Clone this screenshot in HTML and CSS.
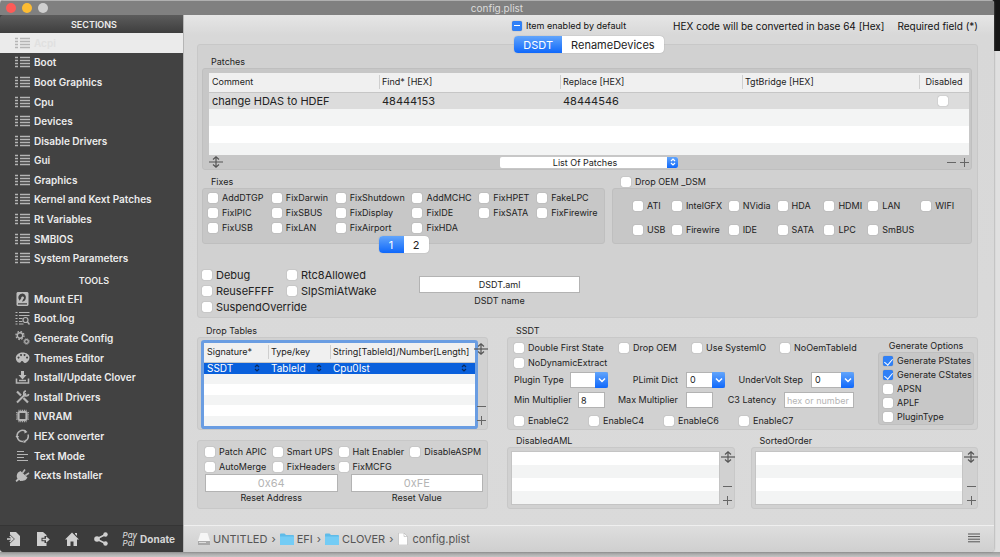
FILE: index.html
```html
<!DOCTYPE html>
<html lang="en">
<head>
    <meta charset="UTF-8">
    <meta name="viewport" content="width=device-width, initial-scale=1.0">
    <title>config.plist</title>
    <link rel="stylesheet" href="styles.css">
</head>
<body>
    <svg class="sprite" aria-hidden="true">
        <symbol id="list" viewBox="0 0 15 12">
            <path d="M0 1.500h3M0 4.500h3M0 7.500h3M0 10.500h3" stroke-width="1.500"/>
            <path d="M5 1.500h10M5 4.500h10M5 7.500h10M5 10.500h10" stroke-width="1.500"/>
        </symbol>
        <symbol id="resize" viewBox="0 0 14 12">
            <path d="M0 6h14" fill="none" stroke="#555" stroke-width="1.200"/>
            <path d="M7 1v10M4 3.500L7 .8l3 2.700M4 8.500l3 2.700 3-2.700" fill="none" stroke="#555" stroke-width="1.200"/>
        </symbol>
        <symbol id="updown" viewBox="0 0 6 8">
            <path d="M1 3L3 1l2 2M1 5l2 2 2-2" fill="none" stroke="currentColor" stroke-width="1.200"/>
        </symbol>
        <symbol id="down" viewBox="0 0 8 6">
            <path d="M1 1.500L4 4.500l3-3" fill="none" stroke="#fff" stroke-width="1.500"/>
        </symbol>
        <symbol id="folder" viewBox="0 0 14 12">
            <path d="M0 1.500Q0 .5 1 .5h3.500L6 2h7q1 0 1 1v8q0 1-1 1H1q-1 0-1-1z" fill="#5fbbe8"/>
            <path d="M0 3.500h14V11q0 1-1 1H1q-1 0-1-1z" fill="#74ccf5"/>
        </symbol>
    </svg>

    <div class="desktop">
    <div class="window">
        <header class="titlebar">
            <div class="lights"><span class="light red"></span><span class="light yellow"></span><span class="light"></span></div>
            <h1>config.plist</h1>
        </header>

        <nav class="sidebar">
            <h2 class="side-head">SECTIONS</h2>
            <ul class="sections">
                <li><a class="active" href="#"><svg><use href="#list"/></svg>Acpi</a></li>
                <li><a href="#"><svg><use href="#list"/></svg>Boot</a></li>
                <li><a href="#"><svg><use href="#list"/></svg>Boot Graphics</a></li>
                <li><a href="#"><svg><use href="#list"/></svg>Cpu</a></li>
                <li><a href="#"><svg><use href="#list"/></svg>Devices</a></li>
                <li><a href="#"><svg><use href="#list"/></svg>Disable Drivers</a></li>
                <li><a href="#"><svg><use href="#list"/></svg>Gui</a></li>
                <li><a href="#"><svg><use href="#list"/></svg>Graphics</a></li>
                <li><a href="#"><svg><use href="#list"/></svg>Kernel and Kext Patches</a></li>
                <li><a href="#"><svg><use href="#list"/></svg>Rt Variables</a></li>
                <li><a href="#"><svg><use href="#list"/></svg>SMBIOS</a></li>
                <li><a href="#"><svg><use href="#list"/></svg>System Parameters</a></li>
            </ul>
            <h2 class="side-head tools-head">TOOLS</h2>
            <ul class="sections tools">
                <li><a href="#"><svg viewBox="0 0 14 14"><path class="fill" fill-rule="evenodd" d="M2 0h10l1 1v12l-1 1H2l-1-1V1zM7 1.500a4.200 4.200 0 0 0-3 7.200L5.800 6.300a1.400 1.400 0 1 1 2 .8L6.500 9.800A4.200 4.200 0 0 0 7 1.500zM2.500 11.200v1.300h9v-1.300z"/></svg>Mount EFI</a></li>
                <li><a href="#"><svg viewBox="0 0 14 14"><path d="M0 1.500h2M3.500 1.500H14M0 4.500h2M3.500 4.500H14M0 7.500h2M3.500 7.500H7M0 10.500h2M3.500 10.500H7M0 13h2M3.500 13H8" stroke-width="1"/><circle cx="10" cy="9" r="2.500" stroke-width="1.200"/><path d="M12 11l2 2.500" stroke-width="1.500"/></svg>Boot.log</a></li>
                <li><a href="#"><svg viewBox="0 0 14 14"><circle cx="4.500" cy="4.500" r="2.700" stroke-width="1.400"/><circle cx="4.500" cy="4.500" r="4" stroke-width="1.300" stroke-dasharray="1.600 1.540"/><circle cx="11" cy="10.500" r="1.800" stroke-width="1.200"/><circle cx="11" cy="10.500" r="2.700" stroke-width="1" stroke-dasharray="1.100 1"/></svg>Generate Config</a></li>
                <li><a href="#"><svg viewBox="0 0 14 14"><path class="fill" fill-rule="evenodd" d="M7 1.500c4 0 7 2.200 7 5s-2 5-4 5.500-2-2-3.500-2-1 2-2.500 1.800C1.500 11.500.3 9 .3 7 .3 4 3 1.500 7 1.500zM3 5.500a1 1 0 1 0 .1 0zM5.500 3a1 1 0 1 0 .1 0zM9 3a1 1 0 1 0 .1 0zM11.500 5.500a1 1 0 1 0 .1 0z"/></svg>Themes Editor</a></li>
                <li><a href="#"><svg viewBox="0 0 14 14"><path class="fill" d="M5.500 1h3v4H11L7 9.500 3 5h2.500z"/><path d="M1 8.500V13h12V8.500M3.500 10.500h7" stroke-width="1.600"/></svg>Install/Update Clover</a></li>
                <li><a href="#"><svg viewBox="0 0 14 14"><path d="M1.500 1.500l4 4M8 8l4.500 4.500" stroke-width="2.200"/><path d="M1.500 12.500l9-9" stroke-width="2"/><path d="M10.500 1a2.500 2.500 0 1 0 2.700 3" stroke-width="1.700"/></svg>Install Drivers</a></li>
                <li><a href="#"><svg viewBox="0 0 14 14"><rect x="3" y="3" width="8" height="8" rx="1" stroke-width="2.200"/><path d="M3 1.300h8M3 12.700h8M1.300 3v8M12.700 3v8" stroke-width="1.200" stroke-dasharray="1 .8"/></svg>NVRAM</a></li>
                <li><a href="#"><svg viewBox="0 0 14 14"><path d="M1.500 7A5.500 5.500 0 0 1 10 2.300M12.500 5.500A5.500 5.500 0 0 1 9.500 12M7.500 12.500A5.500 5.500 0 0 1 2 9" stroke-width="1.500"/><path class="fill" d="M9 .5l3 2.500-3 1.500zM0 7h3.500L2 10zM11 13l-3-2v3z"/></svg>HEX converter</a></li>
                <li><a href="#"><svg viewBox="0 0 14 14"><path d="M1.500 2.500h7M1.500 5.500h11M1.500 8.500h7M1.500 11.500h11" stroke-width="1.200"/></svg>Text Mode</a></li>
                <li><a href="#"><svg viewBox="0 0 14 14"><path class="fill" d="M2.500 4.500L5 3l7 6.500-1.500 2C8 13.500 4.500 13 3.500 12L1.200 14 0 12.800 2 10.500C.8 9 1 6.500 2.500 4.500z"/><path d="M7 5l2.500-3.500M9.800 7.500L13.500 5" stroke-width="1.600"/></svg>Kexts Installer</a></li>
            </ul>
            <div class="side-foot">
                <button type="button" aria-label="Import"><svg viewBox="0 0 14 14"><path class="fill" d="M3 0h6l4 4v10H3v-2.500L7.800 7 3 2.500z"/><path d="M0 7h5.500M2.800 4L6 7l-3.200 3" stroke-width="1.500"/></svg></button>
                <button type="button" aria-label="Export"><svg viewBox="0 0 14 14"><path class="fill" d="M1 0h6l3.500 3v1H8.500v1.800H5.500v3.500h3V11h2v3H1z"/><path class="fill" d="M6.500 6.700H10V4.200l3.800 3.300L10 10.800V8.300H6.500z"/></svg></button>
                <button type="button" aria-label="Home"><svg viewBox="0 0 14 14"><path class="fill" d="M7 .5L14 7.500h-2V14H8.500V9.500h-3V14H2V7.500H0zM10 1h2v3l-2-2z"/></svg></button>
                <button type="button" aria-label="Share"><svg viewBox="0 0 14 14"><path d="M11.500 2.500L2.500 7l9 4.500" stroke-width="1.600"/><circle class="fill" cx="11.500" cy="2.500" r="2.200"/><circle class="fill" cx="3" cy="7" r="2.800"/><circle class="fill" cx="11.500" cy="11.500" r="2.200"/></svg></button>
                <button type="button" class="donate"><span class="paypal">Pay<br>Pal</span>Donate</button>
            </div>
        </nav>

        <main>
            <div class="notes">
                <label class="check"><input type="checkbox" class="mixed">Item enabled by default</label>
                <p>HEX code will be converted in base 64 [Hex]</p>
                <p>Required field (*)</p>
            </div>
            <div class="tabs">
                <button type="button" class="on">DSDT</button>
                <button type="button">RenameDevices</button>
            </div>

            <section class="box dsdt">
                <h3>Patches</h3>
                <div class="inner patches">
                    <table class="patch-table">
                        <thead>
                            <tr><th>Comment</th><th>Find* [HEX]</th><th>Replace [HEX]</th><th>TgtBridge [HEX]</th><th>Disabled</th></tr>
                        </thead>
                        <tbody>
                            <tr><td>change HDAS to HDEF</td><td>48444153</td><td>48444546</td><td></td><td><input type="checkbox" aria-label="Disabled"></td></tr>
                            <tr><td colspan="5"></td></tr>
                            <tr><td colspan="5"></td></tr>
                            <tr><td colspan="5"></td></tr>
                        </tbody>
                    </table>
                    <div class="patch-foot">
                        <svg class="resize"><use href="#resize"/></svg>
                        <div class="popup">
                            <select aria-label="List Of Patches"><option>List Of Patches</option></select>
                            <span class="arrow"><svg><use href="#updown"/></svg></span>
                        </div>
                        <div class="plusminus">
                            <button type="button" class="minus" aria-label="Remove"></button>
                            <button type="button" class="plus" aria-label="Add"></button>
                        </div>
                    </div>
                </div>

                <div class="fix-row">
                    <div>
                        <h3>Fixes</h3>
                        <div class="inner fixes">
                            <label class="check"><input type="checkbox">AddDTGP</label>
                            <label class="check"><input type="checkbox">FixDarwin</label>
                            <label class="check"><input type="checkbox">FixShutdown</label>
                            <label class="check"><input type="checkbox">AddMCHC</label>
                            <label class="check"><input type="checkbox">FixHPET</label>
                            <label class="check"><input type="checkbox">FakeLPC</label>
                            <label class="check"><input type="checkbox">FixIPIC</label>
                            <label class="check"><input type="checkbox">FixSBUS</label>
                            <label class="check"><input type="checkbox">FixDisplay</label>
                            <label class="check"><input type="checkbox">FixIDE</label>
                            <label class="check"><input type="checkbox">FixSATA</label>
                            <label class="check"><input type="checkbox">FixFirewire</label>
                            <label class="check"><input type="checkbox">FixUSB</label>
                            <label class="check"><input type="checkbox">FixLAN</label>
                            <label class="check"><input type="checkbox">FixAirport</label>
                            <label class="check"><input type="checkbox">FixHDA</label>
                        </div>
                        <div class="tabs pages">
                            <button type="button" class="on">1</button>
                            <button type="button">2</button>
                        </div>
                    </div>
                    <div>
                        <label class="check drop-dsm"><input type="checkbox">Drop OEM _DSM</label>
                        <div class="inner dsm">
                            <label class="check"><input type="checkbox">ATI</label>
                            <label class="check"><input type="checkbox">IntelGFX</label>
                            <label class="check"><input type="checkbox">NVidia</label>
                            <label class="check"><input type="checkbox">HDA</label>
                            <label class="check"><input type="checkbox">HDMI</label>
                            <label class="check"><input type="checkbox">LAN</label>
                            <label class="check"><input type="checkbox">WIFI</label>
                            <label class="check"><input type="checkbox">USB</label>
                            <label class="check"><input type="checkbox">Firewire</label>
                            <label class="check"><input type="checkbox">IDE</label>
                            <label class="check"><input type="checkbox">SATA</label>
                            <label class="check"><input type="checkbox">LPC</label>
                            <label class="check"><input type="checkbox">SmBUS</label>
                        </div>
                    </div>
                </div>

                <div class="debug-row">
                    <div class="debug">
                        <label class="check big"><input type="checkbox">Debug</label>
                        <label class="check big"><input type="checkbox">Rtc8Allowed</label>
                        <label class="check big"><input type="checkbox">ReuseFFFF</label>
                        <label class="check big"><input type="checkbox">SlpSmiAtWake</label>
                        <label class="check big"><input type="checkbox">SuspendOverride</label>
                    </div>
                    <div class="field dsdt-name">
                        <input type="text" id="dsdt-name" value="DSDT.aml">
                        <label for="dsdt-name">DSDT name</label>
                    </div>
                </div>
            </section>

            <div class="lower">
                <div>
                    <h3>Drop Tables</h3>
                    <section class="box drop">
                        <table class="drop-table">
                            <thead>
                                <tr><th>Signature*</th><th>Type/key</th><th>String[TableId]/Number[Length]</th></tr>
                            </thead>
                            <tbody>
                                <tr class="selected">
                                    <td><div>SSDT<svg><use href="#updown"/></svg></div></td>
                                    <td><div>TableId<svg><use href="#updown"/></svg></div></td>
                                    <td><div>Cpu0Ist<svg><use href="#updown"/></svg></div></td>
                                </tr>
                                <tr><td colspan="3"></td></tr>
                                <tr><td colspan="3"></td></tr>
                                <tr><td colspan="3"></td></tr>
                                <tr><td colspan="3"></td></tr>
                                <tr><td colspan="3"></td></tr>
                            </tbody>
                        </table>
                        <div class="side-tools">
                            <svg class="resize"><use href="#resize"/></svg>
                            <button type="button" class="minus" aria-label="Remove"></button>
                            <button type="button" class="plus" aria-label="Add"></button>
                        </div>
                    </section>
                    <section class="box reset">
                        <div class="reset-checks">
                            <label class="check"><input type="checkbox">Patch APIC</label>
                            <label class="check"><input type="checkbox">Smart UPS</label>
                            <label class="check"><input type="checkbox">Halt Enabler</label>
                            <label class="check"><input type="checkbox">DisableASPM</label>
                            <label class="check"><input type="checkbox">AutoMerge</label>
                            <label class="check"><input type="checkbox">FixHeaders</label>
                            <label class="check"><input type="checkbox">FixMCFG</label>
                        </div>
                        <div class="reset-fields">
                            <div class="field">
                                <input type="text" id="reset-address" placeholder="0x64">
                                <label for="reset-address">Reset Address</label>
                            </div>
                            <div class="field">
                                <input type="text" id="reset-value" placeholder="0xFE">
                                <label for="reset-value">Reset Value</label>
                            </div>
                        </div>
                    </section>
                </div>

                <div>
                    <h3>SSDT</h3>
                    <section class="box ssdt">
                        <div class="ssdt-form">
                            <div class="states">
                                <label class="check"><input type="checkbox">Double First State</label>
                                <label class="check"><input type="checkbox">Drop OEM</label>
                                <label class="check"><input type="checkbox">Use SystemIO</label>
                                <label class="check"><input type="checkbox">NoOemTableId</label>
                                <label class="check"><input type="checkbox">NoDynamicExtract</label>
                            </div>
                            <div class="params">
                                <label for="plugin">Plugin Type</label>
                                <div class="combo"><select id="plugin"><option></option></select><span class="arrow"><svg><use href="#down"/></svg></span></div>
                                <label for="plimit">PLimit Dict</label>
                                <div class="combo"><select id="plimit"><option>0</option></select><span class="arrow"><svg><use href="#down"/></svg></span></div>
                                <label for="undervolt">UnderVolt Step</label>
                                <div class="combo"><select id="undervolt"><option>0</option></select><span class="arrow"><svg><use href="#down"/></svg></span></div>
                            </div>
                            <div class="params mult">
                                <label for="min-mult">Min Multiplier</label>
                                <input type="text" id="min-mult" value="8">
                                <label for="max-mult">Max Multiplier</label>
                                <input type="text" id="max-mult">
                                <label for="latency">C3 Latency</label>
                                <input type="text" id="latency" placeholder="hex or number">
                            </div>
                            <div class="enables">
                                <label class="check"><input type="checkbox">EnableC2</label>
                                <label class="check"><input type="checkbox">EnableC4</label>
                                <label class="check"><input type="checkbox">EnableC6</label>
                                <label class="check"><input type="checkbox">EnableC7</label>
                            </div>
                        </div>
                        <div class="generate">
                            <h4>Generate Options</h4>
                            <div class="inner">
                                <label class="check"><input type="checkbox" checked>Generate PStates</label>
                                <label class="check"><input type="checkbox" checked>Generate CStates</label>
                                <label class="check"><input type="checkbox">APSN</label>
                                <label class="check"><input type="checkbox">APLF</label>
                                <label class="check"><input type="checkbox">PluginType</label>
                            </div>
                        </div>
                    </section>
                    <div class="lists">
                        <div>
                            <h3>DisabledAML</h3>
                            <section class="box aml">
                                <ul><li></li><li></li><li></li><li></li></ul>
                                <div class="side-tools">
                                    <svg class="resize"><use href="#resize"/></svg>
                                    <button type="button" class="minus" aria-label="Remove"></button>
                                    <button type="button" class="plus" aria-label="Add"></button>
                                </div>
                            </section>
                        </div>
                        <div>
                            <h3>SortedOrder</h3>
                            <section class="box aml">
                                <ul><li></li><li></li><li></li><li></li></ul>
                                <div class="side-tools">
                                    <svg class="resize"><use href="#resize"/></svg>
                                    <button type="button" class="minus" aria-label="Remove"></button>
                                    <button type="button" class="plus" aria-label="Add"></button>
                                </div>
                            </section>
                        </div>
                    </div>
                </div>
            </div>

            <footer class="pathbar">
                <a href="#"><svg viewBox="0 0 12 12"><path d="M2.500 0h7L12 8H0z" fill="#f6f6f6"/><path d="M0 8h12v4H0z" fill="#a9a9a9"/><path d="M1 9h7v1H1z" fill="#ddd"/></svg>UNTITLED</a>
                <span class="sep">›</span>
                <a href="#"><svg class="folder"><use href="#folder"/></svg>EFI</a>
                <span class="sep">›</span>
                <a href="#"><svg class="folder"><use href="#folder"/></svg>CLOVER</a>
                <span class="sep">›</span>
                <a href="#"><svg viewBox="0 0 12 12"><path d="M1.500 0H7l3.500 3.500V12h-9z" fill="#fff" stroke="#b5b5b5" stroke-width=".6"/><path d="M7 0v3.500h3.500" fill="none" stroke="#b5b5b5" stroke-width=".6"/></svg>config.plist</a>
                <button type="button" class="menu" aria-label="Menu"><svg viewBox="0 0 12 9"><path d="M0 .5h12M0 3.100h12M0 5.700h12M0 8.300h12" stroke="#555" stroke-width="1"/></svg></button>
            </footer>
        </main>
    </div>
    </div>
</body>
</html>
```
FILE: styles.css
```css
* {
    box-sizing: border-box;
    margin: 0;
    padding: 0;
}
body {
    font: 9px/12px Inter, "Liberation Sans", sans-serif;
    color: #222;
    background: #dedede;
}
h1, h2, h3, h4 {
    font-size: inherit;
    font-weight: normal;
}
ul {
    list-style: none;
}
a {
    color: inherit;
    text-decoration: none;
}
button, input, select {
    font: inherit;
    color: inherit;
    border: 0;
    border-radius: 0;
    background: none;
    appearance: none;
}
.sprite {
    position: absolute;
    width: 0;
    height: 0;
}

/* desktop showing around the window */
.desktop {
    min-height: 100vh;
    padding: 0 6px 5px 0;
    background: linear-gradient(#161616, #161616) right top / 12px 51px no-repeat,
                linear-gradient(#9b9b9b, #c4c4c4) left bottom / 100% 5px no-repeat, #e0e0e0;
}
.window {
    display: grid;
    grid-template: 15px 1fr / 184px 1fr;
    min-height: calc(100vh - 5px);
    border-radius: 4px;
    box-shadow: 0 0 2px #777;
    overflow: hidden;
    background: #d9d9d9;
}

.titlebar {
    grid-column: 1 / -1;
    display: grid;
    grid-template-columns: 1fr auto 1fr;
    align-items: center;
    padding: 0 6px;
    background: #808080;
    border-top: 1px solid #b0b0b0;
    color: #dcdcdc;
    font-size: 10px;
}
.lights {
    display: flex;
    gap: 6px;
}
.light {
    width: 10px;
    height: 10px;
    border-radius: 50%;
    background: #cfcfcf;
}
.red {
    background: #fc5b57;
}
.yellow {
    background: #fdbc32;
}

/* sidebar */
.sidebar {
    display: flex;
    flex-direction: column;
    background: #424242;
    border-right: 1px solid #b5b5b5;
    color: #ececec;
    font-size: 10px;
    font-weight: 600;
}
.side-head {
    height: 18px;
    padding-left: 5px;
    border-radius: 4px 0 0 0;
    background: linear-gradient(#5c5c5c, #3e3e3e);
    font-size: 9px;
    line-height: 20px;
    font-weight: 600;
    text-align: center;
}
.tools-head {
    height: 21px;
    background: none;
    line-height: 26px;
}
.sections {
    display: grid;
    grid-auto-rows: 1fr;
    height: 235px;
}
.tools {
    height: 196px;
}
.sections a {
    display: flex;
    align-items: center;
    gap: 4px;
    height: 100%;
    padding-left: 15px;
}
.sections svg {
    width: 15px;
    height: 12px;
}
.tools svg {
    height: 14px;
}
.sidebar svg {
    fill: none;
    stroke: #b5b5b5;
}
.sidebar .fill {
    fill: #bdbdbd;
    stroke: none;
}
.sections .active {
    background: #ebebeb;
    color: #e0e0e0;
}
.side-foot {
    display: flex;
    align-items: center;
    justify-content: space-between;
    height: 27px;
    margin-top: auto;
    padding: 0 8px 0 7px;
    border-top: 1px solid #353535;
    background: #3c3c3c;
}
.side-foot button {
    display: flex;
    align-items: center;
    gap: 3px;
}
.side-foot .fill {
    fill: #d0d0d0;
}
.side-foot svg {
    width: 14px;
    height: 14px;
    stroke: #d0d0d0;
}
.donate {
    color: #d6d6d6;
    font-size: 10px;
    font-weight: 700;
}
.paypal {
    font-size: 8px;
    font-style: italic;
    font-weight: 500;
    line-height: 8px;
    text-align: left;
}

/* checkboxes */
.check {
    display: flex;
    align-items: center;
    gap: 4px;
    white-space: nowrap;
}
input[type="checkbox"] {
    display: grid;
    place-content: center;
    flex: none;
    width: 10px;
    height: 10px;
    border-radius: 2px;
    background: #fff;
    box-shadow: 0 0 1px #777;
}
input[type="checkbox"]:checked, input.mixed {
    background: #2f80f7;
}
input[type="checkbox"]:checked::after {
    content: "";
    width: 4px;
    height: 7px;
    border: solid #fff;
    border-width: 0 1px 1px 0;
    transform: rotate(40deg);
}
input.mixed::after {
    content: "";
    width: 6px;
    height: 1px;
    background: #fff;
}
.big {
    font-size: 11px;
}

/* main pane */
main {
    display: flex;
    flex-direction: column;
    min-width: 0;
    background: linear-gradient(#e6e6e6, #d8d8d8 20px, #dadada);
}
.notes {
    display: flex;
    justify-content: flex-end;
    align-items: center;
    height: 21px;
    padding-right: 16px;
    gap: 13px;
    font-size: 10px;
    color: #111;
}
.notes .check {
    margin-right: 34px;
    font-size: 9px;
}
.tabs {
    position: relative;
    display: flex;
    align-self: center;
    height: 17px;
    border-radius: 4px;
    box-shadow: 0 0 1px #888;
    background: #fff;
    overflow: hidden;
    font-size: 11px;
}
.tabs button {
    padding: 0 9px;
}
.tabs .on {
    background: linear-gradient(#62a5fb, #0f68fb);
    color: #fff;
}
.box {
    border: 1px solid #c8c8c8;
    border-radius: 3px;
    background: #d1d1d1;
}
.inner {
    border: 1px solid #bfbfbf;
    border-radius: 3px;
    background: #c7c7c7;
}
h3 {
    height: 12px;
    padding-left: 9px;
}
.dsdt {
    height: 274px;
    margin: -9px 16px 0 13px;
    padding: 11px 5px 0 4px;
}
.patches {
    height: 102px;
    padding: 4px 2px 0 6px;
}
table {
    width: 100%;
    border-collapse: collapse;
    table-layout: fixed;
    background: #fff;
}
th {
    height: 19px;
    padding-left: 3px;
    background: #f0f0f0;
    border-bottom: 1px solid #c6c6c6;
    font-weight: normal;
    text-align: left;
    white-space: nowrap;
}
th + th {
    background: linear-gradient(#cfcfcf, #cfcfcf) left center / 1px 14px no-repeat #f0f0f0;
}
.patch-table th:nth-child(1) { width: 170px; }
.patch-table th:nth-child(2) { width: 181px; }
.patch-table th:nth-child(3) { width: 182px; }
.patch-table th:nth-child(5) { width: 50px; text-align: center; padding: 0; }
.patch-table td {
    height: 17px;
    padding-left: 3px;
    font-size: 11px;
}
.patch-table td input {
    margin: auto;
}
.patch-table td:nth-child(5) {
    padding: 0 2px 0 0;
}
.patch-table tbody tr:first-child {
    background: #dcdcdc;
}
.patch-table tbody tr:nth-child(even), .drop-table tbody tr:nth-child(even), .aml li:nth-child(even) {
    background: #f3f4f4;
}
.patch-table tbody tr:last-child td {
    height: 12px;
}
.patch-foot {
    display: grid;
    grid-template-columns: 1fr 178px 1fr;
    align-items: center;
    height: 14px;
}
.resize {
    flex: none;
    width: 14px;
    height: 12px;
}
.popup, .combo {
    position: relative;
}
.popup select {
    display: block;
    width: 100%;
    height: 11px;
    padding-right: 8px;
    border-radius: 2px;
    background: #fff;
    line-height: 11px;
    text-align-last: center;
}
.arrow {
    position: absolute;
    top: 0;
    right: 0;
    bottom: 0;
    display: grid;
    place-content: center;
    width: 11px;
    border-radius: 0 2px 2px 0;
    background: linear-gradient(#62a5fb, #0f68fb);
    color: #fff;
    pointer-events: none;
}
.arrow svg {
    width: 6px;
    height: 8px;
}
.plusminus {
    display: flex;
    justify-content: flex-end;
    gap: 3px;
}
.minus, .plus {
    width: 10px;
    height: 10px;
    background: linear-gradient(#666, #666) center / 9px 1px no-repeat;
}
.plus {
    background: linear-gradient(#666, #666) center / 9px 1px no-repeat,
                linear-gradient(#666, #666) center / 1px 9px no-repeat;
}

.fix-row {
    display: grid;
    grid-template-columns: 403fr 360fr;
    gap: 7px;
    margin-top: 6px;
}
.fix-row > div {
    display: flex;
    flex-direction: column;
}
.fixes {
    display: grid;
    grid-template-columns: 64fr 64fr 77fr 67fr 58fr minmax(0, 67fr);
    grid-auto-rows: 15px;
    height: 56px;
    padding: 1px 0 0 5px;
}
.pages {
    margin-top: -8px;
}
.pages button {
    width: 25px;
}
.drop-dsm {
    height: 12px;
    padding-left: 9px;
}
.dsm {
    display: grid;
    grid-template-columns: 39fr 57fr 49fr 47fr 44fr 53fr 50fr;
    grid-auto-rows: 24px;
    height: 56px;
    padding: 5px 0 0 20px;
}
.debug-row {
    display: grid;
    grid-template-columns: 217px 161px;
    margin-top: 14px;
}
.debug {
    display: grid;
    grid-template-columns: 85px 1fr;
    grid-auto-rows: 16px;
}
.field {
    display: flex;
    flex-direction: column;
    text-align: center;
}
input[type="text"], .combo select {
    display: block;
    width: 100%;
    min-width: 0;
    height: 16px;
    padding: 0 3px;
    border: 1px solid #b3b3b3;
    background: #fff;
}
input::placeholder {
    color: #b5b5b5;
}
.field input[type="text"] {
    height: 17px;
    text-align: center;
}
.dsdt-name {
    padding-top: 9px;
    gap: 2px;
}

/* lower half */
.lower {
    display: grid;
    grid-template-columns: 291fr 471fr;
    gap: 19px;
    padding: 7px 16px 0 13px;
}
.drop {
    display: flex;
    height: 93px;
    padding: 5px 0 0 6px;
}
.drop-table {
    width: calc(100% - 12px);
    height: 83px;
    box-shadow: 0 0 0 3px #6a9de2;
    border-radius: 1px;
}
.drop-table th:nth-child(1) { width: 64px; }
.drop-table th:nth-child(2) { width: 62px; }
.drop-table td {
    height: 10px;
}
.drop-table .selected {
    background: #0a60dc;
    color: #fff;
}
.selected td {
    height: 11px;
}
.selected div {
    display: flex;
    justify-content: space-between;
    align-items: center;
    height: 11px;
    padding: 0 8px 0 3px;
    font-size: 10px;
    line-height: 11px;
}
.selected svg {
    width: 6px;
    height: 8px;
    color: #0b2a5c;
}
.side-tools {
    display: flex;
    flex-direction: column;
    align-items: center;
    gap: 4px;
    width: 12px;
    margin-left: 2px;
    flex: none;
}
.side-tools .minus {
    margin-top: auto;
}
.drop .side-tools {
    margin-left: 0;
    padding-bottom: 4px;
}
.reset {
    height: 69px;
    margin-top: 10px;
    padding: 3px 4px 0 7px;
}
.reset-checks {
    display: grid;
    grid-template-columns: 68fr 66fr 72fr 73fr;
    grid-auto-rows: 15px;
}
.reset-fields {
    display: grid;
    grid-template-columns: 1fr 1fr;
    gap: 13px;
}
.reset-fields .field input {
    height: 18px;
    font-size: 11px;
}
.ssdt {
    display: grid;
    grid-template-columns: 1fr 96px;
    height: 93px;
    padding: 2px 3px 0 6px;
}
.states {
    display: grid;
    grid-template-columns: 105px 73px 88px 1fr;
    grid-auto-rows: 15px;
}
.params {
    display: grid;
    grid-template-columns: 56px 38px 78px 39px 86px 43px;
    align-items: center;
    height: 20px;
    white-space: nowrap;
}
.params label:not(:first-child) {
    padding-right: 8px;
    text-align: right;
}
.mult {
    grid-template-columns: 64px 27px 81px 27px 71px 70px;
}
.mult input[type="text"] {
    padding: 0 2px;
}
.params .arrow {
    width: 13px;
}
.params .arrow svg {
    width: 8px;
    height: 6px;
}
.enables {
    display: grid;
    grid-template-columns: 75px 75px 75px 1fr;
    height: 21px;
}
.generate h4 {
    text-align: center;
    line-height: 12px;
}
.generate .inner {
    display: grid;
    grid-auto-rows: 14px;
    height: 73px;
    padding: 1px 0 0 4px;
}
.lists {
    display: grid;
    grid-template-columns: 1fr 1fr;
    gap: 16px;
    margin-top: 5px;
}
.aml {
    display: flex;
    height: 62px;
    padding: 3px 0 3px 3px;
}
.aml ul {
    flex: 1;
    display: grid;
    grid-template-rows: repeat(4, 1fr);
    border: 1px solid #c4c4c4;
    background: #fff;
}

.pathbar {
    display: flex;
    align-items: center;
    gap: 4px;
    height: 27px;
    margin-top: auto;
    padding: 0 14px;
    border-top: 1px solid #efefef;
    background: linear-gradient(#dedede, #cfcfcf);
    color: #555;
    font-size: 11px;
}
.pathbar a {
    display: flex;
    align-items: center;
    gap: 3px;
}
.pathbar svg {
    width: 12px;
    height: 12px;
}
.pathbar .folder {
    width: 14px;
}
.menu {
    margin-left: auto;
}
```
